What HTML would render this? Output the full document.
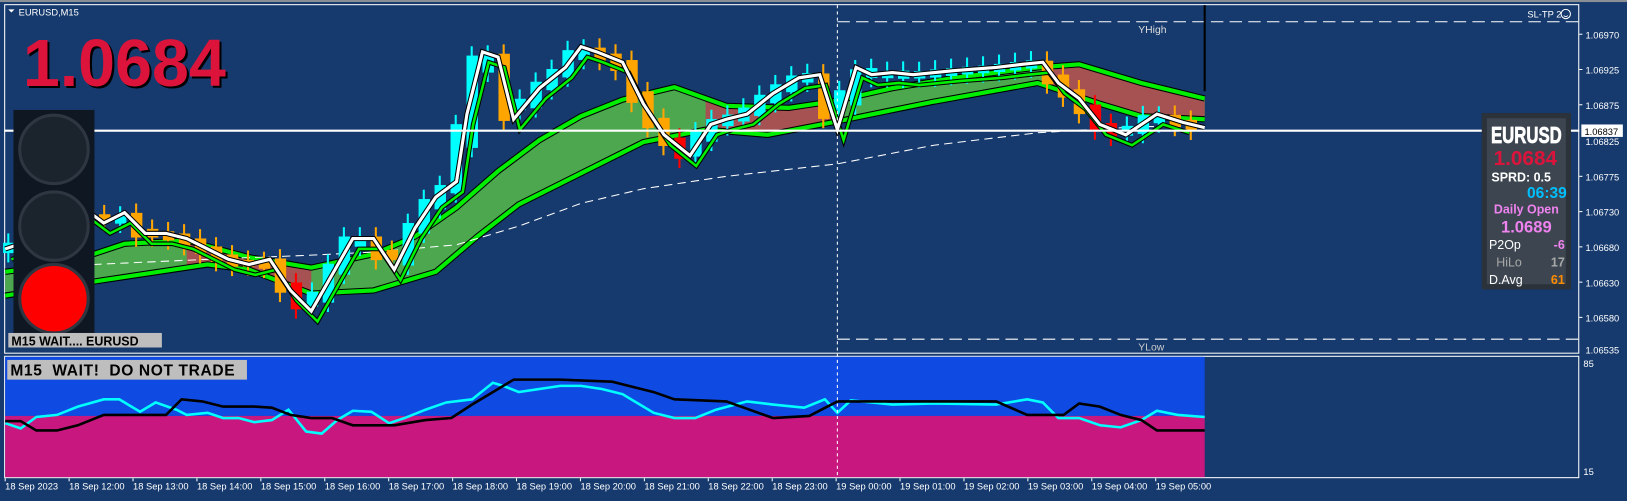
<!DOCTYPE html>
<html><head><meta charset="utf-8"><style>
html,body{margin:0;padding:0;background:#163a6d;overflow:hidden}
svg{display:block}
text{font-family:"Liberation Sans",Arial,sans-serif}
</style></head><body>
<svg id="s" width="1627" height="501" viewBox="0 0 1568 483" preserveAspectRatio="none" xmlns="http://www.w3.org/2000/svg">
<rect x="0" y="0" width="1568" height="483" fill="#163a6d"/>
<rect x="0" y="0" width="1568" height="2" fill="#8a8f96"/>
<rect x="4.5" y="4.5" width="1517" height="336" fill="none" stroke="#fff" stroke-width="1"/>
<rect x="4.5" y="343.5" width="1517" height="117" fill="none" stroke="#fff" stroke-width="1"/>
<rect x="5" y="344" width="1156" height="57" fill="#0f4ae3"/>
<rect x="5" y="401" width="1156" height="59" fill="#c8187f"/>
<g id="chart"></g>
<line x1="4" y1="126" x2="1522" y2="126" stroke="#fff" stroke-width="2"/>
<line x1="807" y1="5" x2="807" y2="460" stroke="#fff" stroke-width="1" stroke-dasharray="3,3"/>
<line x1="807" y1="21" x2="1522" y2="21" stroke="#fff" stroke-width="1" stroke-dasharray="12,6"/>
<line x1="807" y1="327" x2="1522" y2="327" stroke="#fff" stroke-width="1" stroke-dasharray="12,6"/>
<text x="1097" y="32" font-size="10" fill="#ddd">YHigh</text>
<text x="1097" y="338" font-size="10" fill="#ccc">YLow</text>
<line x1="1161" y1="5" x2="1161" y2="88" stroke="#000" stroke-width="2"/>
<text x="1472" y="17" font-size="9" fill="#fff">SL-TP 2</text>
<circle cx="1509" cy="13.5" r="4.5" fill="none" stroke="#fff" stroke-width="1"/>
<path d="M1507 15 Q1509 17 1511 15" fill="none" stroke="#fff" stroke-width="0.8"/>
<path d="M8 9 L14 9 L11 12 Z" fill="#fff"/>
<text x="18" y="15" font-size="9" fill="#fff">EURUSD,M15</text>
<text x="24" y="85" font-size="64" font-weight="bold" fill="#000">1.0684</text>
<text x="22" y="83" font-size="64" font-weight="bold" fill="#dc143c">1.0684</text>
<rect x="13" y="106" width="78" height="217" fill="#0e1722"/>
<circle cx="52" cy="144" r="33" fill="#1b232d" stroke="#2e3641" stroke-width="3"/>
<circle cx="52" cy="218" r="33" fill="#1b232d" stroke="#2e3641" stroke-width="3"/>
<circle cx="52" cy="288" r="33" fill="#ff0000" stroke="#2e3641" stroke-width="3"/>
<rect x="8" y="321" width="148" height="14" fill="#bebebe"/>
<text x="11" y="333" font-size="12" font-weight="bold" fill="#000">M15 WAIT.... EURUSD</text>
<rect x="7" y="347" width="231" height="19" fill="#bebebe"/>
<text x="10" y="362" font-size="15" font-weight="bold" fill="#000" xml:space="preserve" letter-spacing="0.6">M15  WAIT!  DO NOT TRADE</text>
<g font-size="9" fill="#fff">
<text x="1528" y="37">1.06970</text><text x="1528" y="71">1.06925</text><text x="1528" y="105">1.06875</text>
<text x="1528" y="140">1.06825</text><text x="1528" y="174">1.06775</text><text x="1528" y="208">1.06730</text>
<text x="1528" y="242">1.06680</text><text x="1528" y="276">1.06630</text><text x="1528" y="310">1.06580</text>
<text x="1528" y="341">1.06535</text><text x="1526" y="354">85</text><text x="1526" y="458">15</text>
</g>
<g stroke="#fff"><line x1="1522" y1="33" x2="1525" y2="33"/><line x1="1522" y1="67" x2="1525" y2="67"/><line x1="1522" y1="101" x2="1525" y2="101"/><line x1="1522" y1="170" x2="1525" y2="170"/><line x1="1522" y1="204" x2="1525" y2="204"/><line x1="1522" y1="238" x2="1525" y2="238"/><line x1="1522" y1="272" x2="1525" y2="272"/><line x1="1522" y1="306" x2="1525" y2="306"/></g>
<rect x="1524" y="120" width="40" height="12" fill="#fff"/>
<text x="1527" y="130" font-size="9" fill="#000">1.06837</text>
<rect x="1428" y="109" width="86" height="170" fill="#2b323a"/>
<rect x="1433" y="114" width="76" height="160" fill="#3d4650"/>
<g font-weight="bold" text-anchor="middle">
<text font-size="19" fill="#fff" stroke="#fff" stroke-width="0.6" transform="translate(1471 138) scale(0.85 1.15)">EURUSD</text>
<text x="1470" y="159" font-size="20" fill="#dc143c">1.0684</text>
<text x="1466" y="175" font-size="12" fill="#fff">SPRD: 0.5</text>
<text x="1510" y="191" font-size="15" fill="#00bfff" text-anchor="end">06:39</text>
<text x="1471" y="206" font-size="12" fill="#ee82ee">Daily Open</text>
<text x="1471" y="224" font-size="16" fill="#ee82ee">1.0689</text>
</g>
<g font-size="12">
<text x="1435" y="240" fill="#fff">P2Op</text><text x="1508" y="240" fill="#ee82ee" text-anchor="end" font-weight="bold">-6</text>
<text x="1442" y="257" fill="#a9a9a9">HiLo</text><text x="1508" y="257" fill="#a9a9a9" text-anchor="end" font-weight="bold">17</text>
<text x="1435" y="274" fill="#fff">D.Avg</text><text x="1508" y="274" fill="#ff8c00" text-anchor="end" font-weight="bold">61</text>
</g>
<g font-size="9" fill="#fff" id="times"></g>
</svg>
<script>
(function(){
var NS="http://www.w3.org/2000/svg",g=document.getElementById("chart");
function el(t,a){var e=document.createElementNS(NS,t);for(var k in a)e.setAttribute(k,a[k]);g.appendChild(e);return e;}
function pts(a){return a.map(function(p){return p.join(",")}).join(" ");}
var W=[[5,240],[20,235],[40,210],[62,215],[80,200],[100,215],[120,205],[140,225],[160,225],[180,230],[200,240],[220,250],[240,255],[260,250],[280,280],[300,300],[320,265],[340,230],[360,230],[380,260],[400,220],[420,190],[440,175],[450,110],[465,50],[480,55],[495,115],[520,85],[545,65],[560,45],[575,50],[600,60],[620,100],[640,130],[665,150],[685,120],[700,115],[720,110],[745,90],[770,75],[790,72],[807,125],[825,65],[840,72],[860,70],[880,72],[920,68],[960,65],[985,62],[1005,60],[1020,80],[1040,95],[1060,120],[1085,130],[1100,120],[1115,110],[1140,118],[1161,123]];
function interp(x,a){if(x<=a[0][0])return a[0][1];for(var i=1;i<a.length;i++){if(x<=a[i][0]){var p=a[i-1],q=a[i],t=(x-p[0])/(q[0]-p[0]);return p[1]+t*(q[1]-p[1]);}}return a[a.length-1][1];}
var U=[[5,262],[60,255],[120,235],[180,232],[240,248],[300,258],[360,245],[400,228],[440,200],[480,165],[520,135],[560,112],[600,96],[650,84],[700,102],[760,104],[807,97],[860,85],[920,75],[1000,65],[1040,62],[1100,80],[1161,95]];
var L=[[5,285],[100,270],[200,255],[240,260],[300,283],[360,280],[420,262],[460,228],[500,197],[560,167],[620,137],[680,125],[740,130],[807,117],[900,98],[1000,80],[1060,100],[1100,112],[1161,115]];
el("polygon",{points:pts(U.concat(L.slice().reverse())),fill:"#4ca74f"});
function sect(a,b,c){var up=U.filter(function(p){return p[0]>a&&p[0]<b});var lo=L.filter(function(p){return p[0]>a&&p[0]<b});up.unshift([a,interp(a,U)]);up.push([b,interp(b,U)]);lo.unshift([a,interp(a,L)]);lo.push([b,interp(b,L)]);el("polygon",{points:pts(up.concat(lo.reverse())),fill:c});}
sect(680,807,"#a65252");sect(1005,1161,"#a65252");sect(180,300,"#a65252");
el("polyline",{points:pts(U),fill:"none",stroke:"#000","stroke-width":6});
el("polyline",{points:pts(L),fill:"none",stroke:"#000","stroke-width":6});
el("polyline",{points:pts(U),fill:"none",stroke:"#00ee00","stroke-width":4});
el("polyline",{points:pts(L),fill:"none",stroke:"#00ee00","stroke-width":4});
var D=[[90,255],[200,250],[300,246],[360,243],[440,236],[500,218],[560,196],[620,182],[700,170],[807,158],[900,140],[1000,128],[1100,122],[1161,122]];
el("polyline",{points:pts(D),fill:"none",stroke:"#fff","stroke-width":1,"stroke-dasharray":"8,5"});
for(var x=8;x<1161;x+=15.4){var a=interp(x-9,W),b=interp(x+9,W);var ty=Math.min(a,b)-2,h=Math.max(5,Math.abs(a-b)+6);var isUp=b<a;var c=isUp?"#00ffff":(x>800&&x<1000?"#00ffff":"#ffa500");if(!isUp&&((x>640&&x<690)||(x>1050&&x<1110)||(x>270&&x<300)))c="#ff0000";
el("line",{x1:x,y1:ty-9,x2:x,y2:ty+h+9,stroke:c,"stroke-width":2});el("rect",{x:x-5,y:ty,width:11,height:h,fill:c});}
var G=W.map(function(p){return [p[0]+6,p[1]+10]}).filter(function(p){return p[0]<=1161});
el("polyline",{points:pts(G),fill:"none",stroke:"#000","stroke-width":4.5});
el("polyline",{points:pts(G),fill:"none",stroke:"#00ee00","stroke-width":2.5});
el("polyline",{points:pts(W),fill:"none",stroke:"#000","stroke-width":5});
el("polyline",{points:pts(W),fill:"none",stroke:"#fff","stroke-width":3});
var C=[[5,408],[20,413],[35,402],[55,400],[75,392],[100,385],[115,385],[135,397],[150,388],[170,395],[180,400],[200,398],[215,403],[230,403],[245,407],[262,405],[278,395],[295,416],[310,418],[325,405],[340,396],[358,397],[375,408],[390,403],[410,395],[430,388],[455,385],[475,369],[485,372],[500,378],[540,372],[560,372],[580,375],[600,380],[630,398],[650,403],[670,403],[690,395],[720,387],[745,390],[775,393],[795,385],[807,398],[820,386],[860,390],[900,389],[960,390],[990,385],[1005,388],[1020,403],[1040,403],[1060,410],[1080,412],[1100,405],[1115,396],[1135,400],[1161,402]];
var B=[[5,406],[20,406],[35,415],[55,415],[75,410],[100,400],[115,400],[160,400],[175,385],[195,387],[215,392],[245,392],[262,393],[280,400],[300,403],[320,403],[340,410],[380,410],[410,405],[435,403],[455,390],[475,378],[495,366],[540,366],[590,368],[630,378],[650,385],[700,387],[745,403],[780,401],[807,387],[960,387],[990,400],[1005,400],[1025,400],[1040,389],[1060,392],[1080,400],[1100,405],[1115,415],[1161,415]];
el("polyline",{points:pts(C),fill:"none",stroke:"#00ffff","stroke-width":2.5});
el("polyline",{points:pts(B),fill:"none",stroke:"#000","stroke-width":2.5});
var T=["18 Sep 2023","18 Sep 12:00","18 Sep 13:00","18 Sep 14:00","18 Sep 15:00","18 Sep 16:00","18 Sep 17:00","18 Sep 18:00","18 Sep 19:00","18 Sep 20:00","18 Sep 21:00","18 Sep 22:00","18 Sep 23:00","19 Sep 00:00","19 Sep 01:00","19 Sep 02:00","19 Sep 03:00","19 Sep 04:00","19 Sep 05:00"];
var tg=document.getElementById("times");
T.forEach(function(s,i){var x=5+i*61.6;var t=document.createElementNS(NS,"text");t.setAttribute("x",x);t.setAttribute("y",472);t.textContent=s;tg.appendChild(t);var l=document.createElementNS(NS,"line");l.setAttribute("x1",x);l.setAttribute("x2",x);l.setAttribute("y1",461);l.setAttribute("y2",464);l.setAttribute("stroke","#fff");tg.appendChild(l);});
})();
</script>
</body></html>
